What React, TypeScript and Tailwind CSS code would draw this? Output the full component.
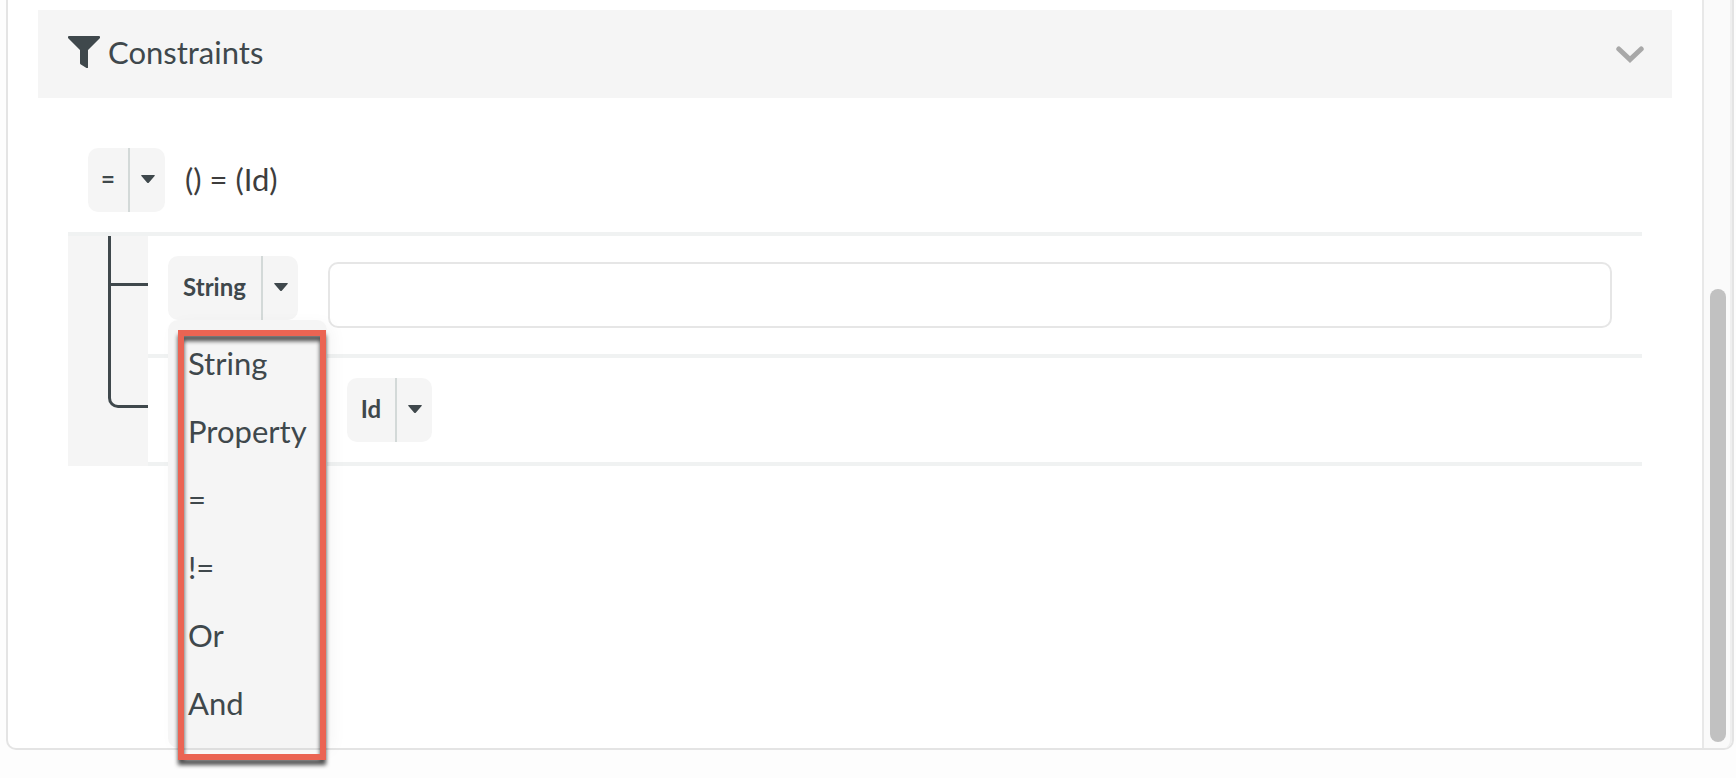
import React from "react";

const options = ["String", "Property", "=", "!=", "Or", "And"];

function FunnelIcon() {
  return (
    <svg viewBox="0 0 32 32" className="size-8 shrink-0" fill="currentColor" aria-hidden="true">
      <path d="M1 0H31Q32 0 32 1V2L20 14V31.5Q20 32 19.5 32H18.5L12.5 28.2Q12 27.8 12 27V14L0 2V1Q0 0 1 0Z" />
    </svg>
  );
}

function ChevronIcon() {
  return (
    <svg viewBox="0 0 28 18" className="h-[18px] w-7" fill="none" aria-hidden="true">
      <path d="M2.8 3L14 13.6L25.2 3" stroke="#a8a8a8" strokeWidth="5" strokeLinecap="round" />
    </svg>
  );
}

function CaretIcon() {
  return (
    <svg viewBox="0 0 14 8" className="h-2 w-3.5" fill="currentColor" aria-hidden="true">
      <path d="M0.8 0H13.2Q14.3 0.2 13.6 1L8 7.4Q7 8.4 6 7.4L0.4 1Q-0.3 0.2 0.8 0Z" />
    </svg>
  );
}

function SplitButton({ label, width, open = false }: { label: string; width: string; open?: boolean }) {
  return (
    <div className="flex h-16 shrink-0 overflow-hidden rounded-[10px] bg-[#f5f5f5] text-2xl leading-7 font-bold">
      <button type="button" className={`border-r-2 border-[#d3d9d8] pb-0.5 text-center ${width}`}>
        {label}
      </button>
      <button
        type="button"
        aria-label={`Change ${label}`}
        aria-expanded={open}
        className="flex w-[35px] items-center justify-center pb-0.5"
      >
        <CaretIcon />
      </button>
    </div>
  );
}

function TypeMenu() {
  return (
    <div className="absolute top-full left-0 z-10 w-[159px] rounded-[10px] bg-[#f5f5f5] py-2.5 shadow-[6px_4px_16px_rgba(0,0,0,0.04)]">
      <ul>
        {options.map((option) => (
          <li key={option}>
            <button type="button" className="flex h-[68px] w-full items-center pb-0.5 pl-5 text-[31px] leading-9">
              {option}
            </button>
          </li>
        ))}
      </ul>
      <div className="pointer-events-none absolute top-2.5 -bottom-3 left-2.5 w-[148px] border-6 border-[#eb6453] drop-shadow-[0_5px_2px_rgba(0,0,0,0.7)]" />
    </div>
  );
}

export default function App() {
  return (
    <div className="flex min-h-screen flex-col bg-[#fdfdfd] pr-0.5 pb-7 pl-1.5 font-['Lato',sans-serif] text-[#3f484c]">
      <main className="flex flex-1 rounded-b-[10px] border-x-2 border-b-2 border-[#e4e4e4] bg-white">
        <div className="min-w-0 flex-1 px-[30px] pt-2.5">
          <header className="flex h-[88px] items-center justify-between bg-[#f5f5f5] pr-7 pl-[30px]">
            <h2 className="flex items-center gap-2 pb-1 text-[31px] leading-9">
              <FunnelIcon />
              Constraints
            </h2>
            <button type="button" aria-label="Collapse constraints" className="pt-0.5">
              <ChevronIcon />
            </button>
          </header>

          <section className="px-[30px] pt-[50px]">
            <div className="flex items-center gap-5 pb-5 pl-5">
              <SplitButton label="=" width="w-[42px]" />
              <span className="pb-0.5 text-[31px] leading-9 text-[#3d3d3d]">() = (Id)</span>
            </div>

            <div className="flex border-t-4 border-[#f0f2f2]">
              <div className="w-20 shrink-0 bg-[#f5f5f5] pl-10">
                <div className="h-[50px] border-b-3 border-l-3 border-[#3f484c]" />
                <div className="h-[122px] rounded-bl-[10px] border-b-3 border-l-3 border-[#3f484c]" />
              </div>
              <div className="min-w-0 flex-1">
                <div className="flex items-start gap-[30px] border-b-4 border-[#f0f2f2] pt-5 pr-[30px] pb-[26px] pl-5">
                  <div className="relative">
                    <SplitButton label="String" width="w-[95px]" open />
                    <TypeMenu />
                  </div>
                  <input
                    type="text"
                    aria-label="String value"
                    className="mt-1.5 h-[66px] min-w-0 flex-1 rounded-[10px] border-2 border-[#e6e6e6] bg-white px-5 text-[31px] outline-none"
                  />
                </div>
                <div className="flex border-b-4 border-[#f0f2f2] py-5 pl-[199px]">
                  <SplitButton label="Id" width="w-[50px]" />
                </div>
              </div>
            </div>
          </section>
        </div>

        <div className="flex w-[30px] shrink-0 flex-col items-center justify-end rounded-br-lg border-r-2 border-l-2 border-r-[#efefef] border-l-[#e8e8e8] bg-[#fafafa] pb-1.5 pl-0.5">
          <div className="h-[61%] w-4 rounded-full bg-[#c1c1c1]" />
        </div>
      </main>
    </div>
  );
}
